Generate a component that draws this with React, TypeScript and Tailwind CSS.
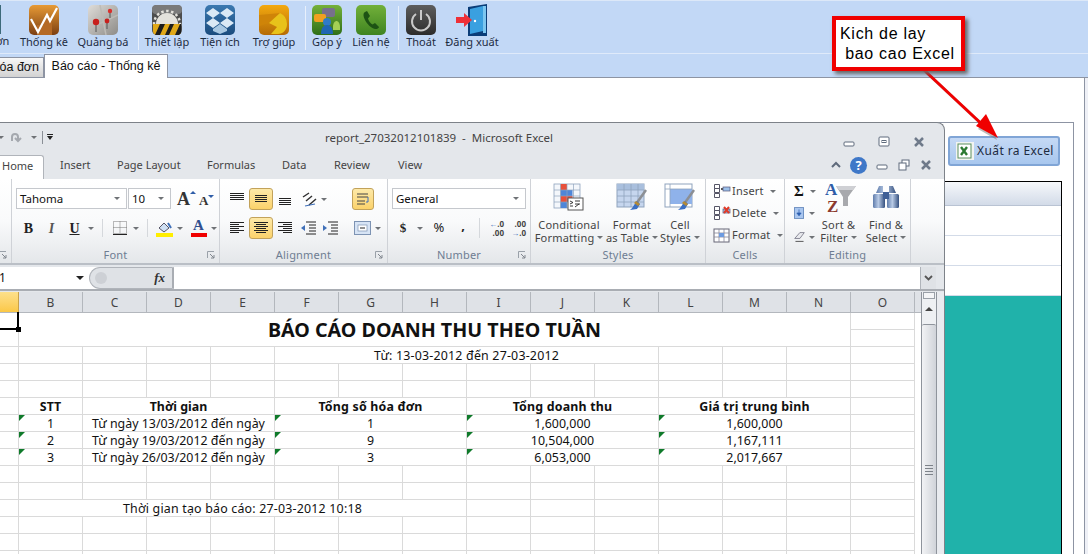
import React from 'react';

const ui = { fontFamily: '"Noto Sans", sans-serif' };

const Dd = ({ className = '' }: { className?: string }) => (
  <span className={`inline-block w-0 h-0 border-x-[3px] border-t-[3px] border-x-transparent border-t-[#6f7276] ${className}`} />
);

const ToolIcon = ({ name }: { name: string }) => {
  const base = { width: 30, height: 30, viewBox: '0 0 30 30' };
  switch (name) {
    case 'stats':
      return (
        <svg {...base}>
          <defs><linearGradient id="st" x1="0" y1="0" x2="0" y2="1"><stop offset="0" stopColor="#e79a35" /><stop offset="1" stopColor="#7c3f12" /></linearGradient></defs>
          <rect width="30" height="30" rx="5" fill="url(#st)" />
          <path d="M8 30V20h7v-6h8v16z" fill="#b56a25" />
          <polyline points="2,14 9,27 18,10 21,16 28,3" fill="none" stroke="#fff" strokeWidth="2.2" />
        </svg>
      );
    case 'pins':
      return (
        <svg {...base}>
          <defs><linearGradient id="pn" x1="0" y1="0" x2="1" y2="1"><stop offset="0" stopColor="#dedcd8" /><stop offset="1" stopColor="#8e8c88" /></linearGradient></defs>
          <rect width="30" height="30" rx="5" fill="url(#pn)" />
          <path d="M0 24L30 10M12 0L18 30" stroke="#bdbbb6" strokeWidth="1.5" />
          <path d="M8 18v9M19 17v7M22 6v7" stroke="#555" strokeWidth="1" />
          <circle cx="8" cy="17" r="3.2" fill="#c8201c" />
          <circle cx="19" cy="16" r="2.4" fill="#c8201c" />
          <circle cx="22" cy="6" r="2.2" fill="#d8302c" />
        </svg>
      );
    case 'settings':
      return (
        <svg {...base}>
          <rect width="30" height="30" rx="5" fill="#4d4d4d" />
          <rect width="30" height="9" rx="4" fill="#7a7a7a" />
          <circle cx="15" cy="19" r="11" fill="#e4e2dc" />
          <circle cx="15" cy="19" r="13" fill="none" stroke="#e4e2dc" strokeWidth="2.5" strokeDasharray="2.5 2.5" />
          <path d="M1 19h28v7a4 4 0 0 1-4 4H5a4 4 0 0 1-4-4z" fill="#e0a818" />
          <path d="M3 30l5-11h5l-5 11zM13 30l5-11h4l-5 11zM23 30l5-11h1v9l-2 2z" fill="#1d1d1d" />
        </svg>
      );
    case 'box':
      return (
        <svg {...base}>
          <defs><linearGradient id="bx" x1="0" y1="0" x2="0" y2="1"><stop offset="0" stopColor="#3b79b0" /><stop offset="1" stopColor="#1b4c7e" /></linearGradient></defs>
          <rect width="30" height="30" rx="5" fill="url(#bx)" />
          <path d="M8 3l7 5-7 5-7-5zM22 3l7 5-7 5-7-5zM8 13l7 5-7 5-7-5zM22 13l7 5-7 5-7-5z" fill="#dbe9f5" />
          <path d="M8 24l7-5 7 5v2l-7 3-7-3z" fill="#a9c8e2" />
        </svg>
      );
    case 'help':
      return (
        <svg {...base}>
          <defs><linearGradient id="hp" x1="0" y1="0" x2="0" y2="1"><stop offset="0" stopColor="#f3a90f" /><stop offset="1" stopColor="#b56b06" /></linearGradient></defs>
          <rect width="30" height="30" rx="5" fill="url(#hp)" />
          <path d="M0 10L22 8 10 18 0 21z" fill="#cf8408" />
          <path d="M10 18L21 8a12 12 0 0 1 7 11c0 6-4 10-9 10h-7l6-7z" fill="#e8c21a" />
        </svg>
      );
    case 'feedback':
      return (
        <svg {...base}>
          <defs><linearGradient id="fb" x1="0" y1="0" x2="0" y2="1"><stop offset="0" stopColor="#75b13a" /><stop offset="1" stopColor="#2f6f17" /></linearGradient></defs>
          <rect width="30" height="30" rx="5" fill="url(#fb)" />
          <rect x="10" y="3" width="13" height="9" rx="2" fill="#77708c" />
          <rect x="2" y="9" width="12" height="8" rx="2" fill="#f0a020" />
          <circle cx="15" cy="17" r="4" fill="#2f7ac8" />
          <path d="M9 29c0-7 3-9 6-9s6 2 6 9z" fill="#1f66b4" />
          <path d="M21 22c0-4 2-6 3.500-6s3.500 2 3.500 6v3h-7z" fill="#a4cf55" />
        </svg>
      );
    case 'phone':
      return (
        <svg {...base}>
          <defs><linearGradient id="ph" x1="0" y1="0" x2="0" y2="1"><stop offset="0" stopColor="#72b03a" /><stop offset="1" stopColor="#3f8420" /></linearGradient></defs>
          <rect width="30" height="30" rx="5" fill="url(#ph)" />
          <path d="M9 7c-2 1-2 4 0 8s6 8 10 9c2 .5 4-1 4-2l-4-4-2.500 1.500c-2-1-4-4-4.500-6L14 11l-3-5z" fill="#1d5314" />
        </svg>
      );
    case 'power':
      return (
        <svg {...base}>
          <defs><linearGradient id="pw" x1="0" y1="0" x2="0" y2="1"><stop offset="0" stopColor="#5d5d5d" /><stop offset="1" stopColor="#2c2c2c" /></linearGradient></defs>
          <rect width="30" height="30" rx="5" fill="url(#pw)" />
          <path d="M10 9a9 9 0 1 0 10 0" fill="none" stroke="#c9c9c9" strokeWidth="2" />
          <path d="M15 5v10" stroke="#c9c9c9" strokeWidth="2" />
        </svg>
      );
    default:
      return (
        <svg width="32" height="32" viewBox="0 0 32 32">
          <path d="M12 3L31 0v32H12z" fill="#0b3d78" />
          <path d="M14 5l13-3v25l-13 3z" fill="#3aa0e0" />
          <path d="M27 2h3v27h-3z" fill="#7cc6f0" />
          <path d="M0 13h8V9l8 7-8 7v-4H0z" fill="#ee2f37" />
          <circle cx="19" cy="17" r="1.200" fill="#fff" />
        </svg>
      );
  }
};

const toolbar = [
  { label: 'Thống kê', icon: 'stats', w: 'w-[60px]' },
  { label: 'Quảng bá', icon: 'pins', w: 'w-[58px]' },
  { sep: 'ml-[6px]' },
  { label: 'Thiết lập', icon: 'settings', w: 'w-[56px]' },
  { label: 'Tiện ích', icon: 'box', w: 'w-[50px]' },
  { label: 'Trợ giúp', icon: 'help', w: 'w-[58px]' },
  { sep: 'ml-[2px]' },
  { label: 'Góp ý', icon: 'feedback', w: 'w-[42px]' },
  { label: 'Liên hệ', icon: 'phone', w: 'w-[46px]' },
  { sep: 'ml-[4px]' },
  { label: 'Thoát', icon: 'power', w: 'w-[44px]' },
  { label: 'Đăng xuất', icon: 'door', w: 'w-[58px]' },
];

const Toolbar = () => (
  <div className="h-[54px] flex bg-[#c2d8f6] border-t border-[#dce8f8] border-b border-b-[#dfeafa] overflow-hidden" style={ui}>
    <div className="w-[14px] flex flex-col justify-end items-start pb-[5px] relative">
      <span className="absolute left-0 top-[4px] w-px h-[29px] bg-[#3d6a7a]" />
      <span className="text-[11px] leading-[14px] text-[#1d2b3f] -ml-[11px] whitespace-nowrap">đơn</span>
    </div>
    {toolbar.map((t, i) =>
      t.sep ? (
        <div key={i} className={`w-px h-[44px] mt-[5px] bg-[#e8f0fb] ${t.sep}`} />
      ) : (
        <div key={i} className={`${t.w} flex flex-col items-center pt-[3px]`}>
          <div className="h-[31px] flex items-center"><ToolIcon name={t.icon as string} /></div>
          <span className="text-[11px] leading-[14px] text-[#1d2b3f] whitespace-nowrap">{t.label}</span>
        </div>
      )
    )}
  </div>
);

const Tabs = () => (
  <div className="h-[24px] flex items-end bg-[#c2d8f6] border-b border-[#8d94a3] font-['Liberation_Sans',sans-serif]">
    <div className="w-[44px] h-[21px] -mb-px flex items-center justify-end pr-[4px] overflow-hidden bg-linear-to-b from-[#f8f8f8] to-[#d2d2d2] border-t border-r border-b border-[#8d94a3] text-[12.500px] text-[#111] whitespace-nowrap">
      óa đơn
    </div>
    <div className="w-[124px] h-[24px] -mb-px flex items-center justify-center bg-white border-t border-x border-[#8d94a3] text-[12.500px] text-[#111]">
      Báo cáo - Thống kê
    </div>
  </div>
);

// ribbon small icons
const LinesIcon = ({ rows }: { rows: number[][] }) => (
  <svg width="16" height="14" viewBox="0 0 16 14">
    {rows.map(([x1, x2, y], i) => (
      <line key={i} x1={x1} x2={x2} y1={y + 0.5} y2={y + 0.5} stroke="#222" strokeWidth="1" />
    ))}
  </svg>
);
const top3 = [[1, 15, 1], [1, 15, 3], [1, 15, 5], [1, 15, 7]];
const mid3 = [[2, 14, 3], [2, 14, 5], [2, 14, 7], [2, 14, 9]];
const bot3 = [[2, 14, 6], [2, 14, 8], [2, 14, 10], [2, 14, 12]];
const left = [[1, 15, 1], [1, 10, 3], [1, 15, 5], [1, 10, 7], [1, 15, 9], [1, 10, 11]];
const center = [[1, 15, 1], [3, 13, 3], [1, 15, 5], [3, 13, 7], [1, 15, 9], [3, 13, 11]];
const right = [[1, 15, 1], [6, 15, 3], [1, 15, 5], [6, 15, 7], [1, 15, 9], [6, 15, 11]];

const Active = ({ children, className = 'w-[24px]' }: { children: React.ReactNode; className?: string }) => (
  <div className={`h-[22px] ${className} flex items-center justify-center rounded-[3px] border border-[#c2a25a] bg-linear-to-b from-[#fde9a8] to-[#fbd26a]`}>
    {children}
  </div>
);
const Box = ({ className = 'w-[24px]', children }: { className?: string; children?: React.ReactNode }) => (
  <div className={`h-[22px] ${className} flex items-center justify-center`}>{children}</div>
);

const Group = ({ label, className, launcher, children }: { label: string; className: string; launcher?: boolean; children: React.ReactNode }) => (
  <div className={`${className} relative flex flex-col border-r border-[#cfd2d7]`}>
    <div className="flex-1 min-h-0">{children}</div>
    <div className="h-[17px] text-center text-[11px] leading-[17px] text-[#6e7d92] tracking-[0.2px]">{label}</div>
    {launcher && (
      <svg className="absolute right-[4px] bottom-[4px]" width="8" height="8" viewBox="0 0 8 8">
        <path d="M0.5 7V0.5H7" fill="none" stroke="#9aa1a9" />
        <path d="M3 3l4 4M7 4v3H4" fill="none" stroke="#80868e" />
      </svg>
    )}
  </div>
);

const Combo = ({ className, text }: { className: string; text: string }) => (
  <div className={`${className} h-[21px] bg-white border border-[#c5c8cd] flex items-center justify-between pl-[3px] pr-[6px] text-[11.500px] text-[#111]`}>
    <span>{text}</span>
    <Dd />
  </div>
);

const BigIcon = ({ type }: { type: 'cond' | 'table' | 'cell' }) => (
  <svg width="32" height="28" viewBox="0 0 32 28">
    {type === 'cond' && (
      <>
        <g fill="#f4f7fb" stroke="#8fa3bd" strokeWidth="0.8">
          <rect x="1" y="1" width="26" height="24" />
        </g>
        <rect x="7.500" y="1" width="6.500" height="6" fill="#e8503a" />
        <rect x="7.500" y="7" width="12" height="6" fill="#4f86d8" />
        <rect x="7.500" y="13" width="12" height="6" fill="#e8503a" />
        <rect x="7.500" y="19" width="6.500" height="6" fill="#4f86d8" />
        <path d="M1 7h26M1 13h26M1 19h26M7.500 1v24M14 1v24M20.500 1v24" stroke="#8fa3bd" strokeWidth="0.7" />
        <rect x="15" y="15" width="15" height="12" fill="#fff" stroke="#555" />
        <path d="M17 18l3 1.500-3 1.500M17 23h3M22 18h5M22 21h5M22 24l4-3" fill="none" stroke="#222" strokeWidth="0.9" />
      </>
    )}
    {type !== 'cond' && (
      <>
        <rect x="1" y="1" width="27" height="23" fill={type === 'table' ? '#c6d6ee' : '#fff'} stroke="#8fa3bd" />
        {type === 'cell' && <rect x="6" y="6" width="22" height="15" fill="#8fb2ea" />}
        {type === 'table' && <rect x="1" y="1" width="27" height="6" fill="#a9bfdd" />}
        {type === 'table' && <path d="M1 7h27M1 13h27M1 19h27M8 1v23M15 1v23M22 1v23" stroke="#8fa3bd" strokeWidth="0.8" />}
        {type === 'cell' && <path d="M1 6h27M6 1v23" stroke="#8fa3bd" strokeWidth="0.8" />}
        <path d="M30 7L20 21" stroke="#8c8f94" strokeWidth="2.500" />
        <path d="M21 18l3 3-3 5-7 1c3-2 4-6 7-9z" fill="#3b6fc2" />
        <path d="M20 18l4 3-2 2-4-3z" fill="#b58a34" />
      </>
    )}
  </svg>
);

const CellRow = ({ text, kind }: { text: string; kind: 'ins' | 'del' | 'fmt' }) => (
  <div className="h-[22px] flex items-center text-[11px] text-[#444] tracking-[0.2px]">
    <svg width="18" height="16" viewBox="0 0 18 16" className="mr-[1px]">
      {kind === 'fmt' ? (
        <>
          <rect x="1" y="2" width="15" height="13" fill="#fff" stroke="#667" />
          <path d="M1 6h15M1 10h15M6 2v13M11 2v13" stroke="#889" strokeWidth="0.8" />
          <rect x="6" y="6" width="5" height="4" fill="#6d9be0" />
        </>
      ) : (
        <>
          <path d="M1.500 1.500h5v4h-5zM1.500 5.500h5v4h-5zM1.500 10.500h5v4h-5z" fill="#fff" stroke="#556" />
          {kind === 'ins' && <path d="M8 6h2M9 5v2" stroke="#222" />}
          <rect x="10" y="4" width="7" height="4" fill="#9cc0ea" stroke="#557" strokeWidth="0.7" />
          {kind === 'del' && <path d="M11 2l5 6M16 2l-5 6" stroke="#e03a28" strokeWidth="2" />}
        </>
      )}
    </svg>
    <span>{text}</span>
    <Dd className="ml-[6px]" />
  </div>
);

const Ribbon = () => (
  <div className="h-[86px] flex bg-linear-to-b from-white via-[#f9fafb] to-[#e4e7ea] border-b-2 border-[#babfc6]" style={ui}>
    <Group label="" className="w-[12px]" launcher><div /></Group>

    <Group label="Font" className="w-[208px]" launcher>
      <div className="pt-[9px] pl-[4px]">
        <div className="flex items-center">
          <Combo className="w-[111px]" text="Tahoma" />
          <Combo className="w-[43px] ml-px" text="10" />
          <div className="ml-[6px] w-[22px] flex font-['Liberation_Serif',serif] font-bold text-[18px] leading-none text-[#333] items-start">A<span className="w-0 h-0 mt-[1px] border-x-[3px] border-b-[3px] border-x-transparent border-b-[#2f5da8]" /></div>
          <div className="w-[20px] flex font-['Liberation_Serif',serif] font-bold text-[13px] leading-none text-[#333] items-end pt-[4px]">A<span className="w-0 h-0 mb-[9px] border-x-[3px] border-t-[3px] border-x-transparent border-t-[#2f5da8]" /></div>
        </div>
        <div className="flex items-center mt-[9px] h-[20px] font-['Liberation_Serif',serif] text-[#222]">
          <Box className="w-[23px] ml-[1px] font-bold text-[14px]">B</Box>
          <Box className="w-[23px] italic font-bold text-[14px] text-[#555]">I</Box>
          <Box className="w-[23px] underline font-bold text-[14px]">U</Box>
          <Dd className="ml-[2px]" />
          <div className="w-px h-[18px] bg-[#d5d8dc] ml-[8px]" />
          <svg className="ml-[10px]" width="14" height="14" viewBox="0 0 14 14">
            <path d="M0.500 0.500h13v12h-13zM7 0.500v12M0.500 6.500h13" fill="none" stroke="#777" strokeDasharray="1 1" />
            <path d="M0 13.500h14" stroke="#222" />
          </svg>
          <Dd className="ml-[6px]" />
          <div className="w-px h-[18px] bg-[#d5d8dc] ml-[8px]" />
          <svg className="ml-[8px]" width="17" height="17" viewBox="0 0 17 17">
            <path d="M3 8l5-5 5 5-5 4z" fill="#cfe0f3" stroke="#556" />
            <path d="M12 3l3 5" stroke="#3f6fb8" strokeWidth="2" />
            <rect y="13" width="17" height="4" fill="#ffee00" />
          </svg>
          <Dd className="ml-[4px]" />
          <div className="ml-[7px] w-[17px] flex flex-col items-center font-bold text-[15px] leading-[13px] text-[#2f4f8f]">
            A<span className="w-[16px] h-[4px] bg-[#f00000] mt-px" />
          </div>
          <Dd className="ml-[4px]" />
        </div>
      </div>
    </Group>

    <Group label="Alignment" className="w-[168px]" launcher>
      <div className="pt-[9px] pl-[5px] flex">
        <div className="w-[127px]">
          <div className="flex items-center">
            <Box><LinesIcon rows={top3} /></Box>
            <Active><LinesIcon rows={mid3} /></Active>
            <Box><LinesIcon rows={bot3} /></Box>
            <svg className="ml-[4px]" width="17" height="17" viewBox="0 0 17 17">
              <path d="M2 6l6-4M5 10l6-5M8 14l7-6" stroke="#333" strokeWidth="1.500" />
              <path d="M4 15l10-2" stroke="#3f6fb8" strokeWidth="1.200" />
            </svg>
            <Dd className="ml-[3px]" />
          </div>
          <div className="flex items-center mt-[7px]">
            <Box><LinesIcon rows={left} /></Box>
            <Active><LinesIcon rows={center} /></Active>
            <Box><LinesIcon rows={right} /></Box>
            <svg className="ml-[3px]" width="16" height="14" viewBox="0 0 16 14">
              <path d="M6 1h10M9 4h7M9 7h7M9 10h7M6 13h10" stroke="#222" />
              <path d="M1 7l4-3v6z" fill="#3f6fb8" />
            </svg>
            <svg className="ml-[6px]" width="16" height="14" viewBox="0 0 16 14">
              <path d="M6 1h10M9 4h7M9 7h7M9 10h7M6 13h10" stroke="#222" />
              <path d="M5 7L1 4v6z" fill="#3f6fb8" />
            </svg>
          </div>
        </div>
        <div>
          <Active className="w-[22px]">
            <svg width="14" height="14" viewBox="0 0 14 14">
              <path d="M1 2h11M1 5h11M1 9h8M1 12h8" stroke="#444" />
              <path d="M12 5v5h-2" fill="none" stroke="#3f6fb8" />
            </svg>
          </Active>
          <div className="flex items-center mt-[7px] h-[22px]">
            <svg className="ml-[2px]" width="17" height="14" viewBox="0 0 17 14">
              <rect x="0.500" y="0.500" width="16" height="13" fill="#d7e4f5" stroke="#7d93b3" />
              <rect x="4" y="4" width="9" height="6" fill="#fff" stroke="#7d93b3" strokeWidth="0.7" />
              <path d="M6 7h5" stroke="#222" />
            </svg>
            <Dd className="ml-[4px]" />
          </div>
        </div>
      </div>
    </Group>

    <Group label="Number" className="w-[143px]" launcher>
      <div className="pt-[9px] pl-[4px]">
        <Combo className="w-[134px]" text="General" />
        <div className="flex items-center mt-[9px] h-[20px] text-[#222]">
          <span className="w-[22px] text-center font-bold text-[13px] font-['Liberation_Serif',serif]">$</span>
          <Dd className="ml-[3px]" />
          <span className="w-[20px] ml-[6px] text-center text-[13px]">%</span>
          <span className="w-[20px] ml-[4px] text-center font-bold text-[13px] -mt-[4px]">,</span>
          <div className="w-px h-[20px] bg-[#d5d8dc] ml-[6px]" />
          <div className="ml-[8px] w-[16px] text-[8px] leading-[9px] text-right font-bold text-[#444]"><span className="text-[#3f6fb8]">←</span>.0<br />.00</div>
          <div className="ml-[6px] w-[16px] text-[8px] leading-[9px] text-right font-bold text-[#444]">.00<br /><span className="text-[#3f6fb8]">→</span>.0</div>
        </div>
      </div>
    </Group>

    <Group label="Styles" className="w-[175px]">
      <div className="flex text-[11px] leading-[13px] text-[#444] text-center tracking-[0.2px]">
        {[
          { i: 'cond', w: 'w-[76px]', a: 'Conditional', b: 'Formatting' },
          { i: 'table', w: 'w-[50px]', a: 'Format', b: 'as Table' },
          { i: 'cell', w: 'w-[46px]', a: 'Cell', b: 'Styles' },
        ].map((s) => (
          <div key={s.a} className={`${s.w} flex flex-col items-center pt-[4px] whitespace-nowrap`}>
            <div className="h-[35px]"><BigIcon type={s.i as 'cond'} /></div>
            <span>{s.a}</span>
            <span className="flex items-center">{s.b}<Dd className="ml-[3px]" /></span>
          </div>
        ))}
      </div>
    </Group>

    <Group label="Cells" className="w-[79px]">
      <div className="pt-[1px] pl-[7px]">
        <CellRow text="Insert" kind="ins" />
        <CellRow text="Delete" kind="del" />
        <CellRow text="Format" kind="fmt" />
      </div>
    </Group>

    <Group label="Editing" className="w-[126px]">
      <div className="flex text-[11px] leading-[13px] text-[#444] text-center tracking-[0.2px]">
        <div className="w-[30px] pl-[9px] pt-[1px] shrink-0">
          <div className="h-[22px] flex items-center font-bold text-[15px] text-[#111] font-['Liberation_Serif',serif]">Σ<Dd className="ml-[6px]" /></div>
          <div className="h-[22px] flex items-center">
            <svg width="14" height="16" viewBox="0 0 14 16">
              <rect x="0.500" y="0.500" width="13" height="15" fill="#a9c6ef" stroke="#4e76b0" />
              <path d="M7 3v7M4 8l3 4 3-4z" fill="#2a5fb0" stroke="#2a5fb0" />
            </svg>
            <Dd className="ml-[5px]" />
          </div>
          <div className="h-[22px] flex items-center mt-[2px]">
            <svg width="15" height="14" viewBox="0 0 15 14">
              <path d="M1 9l7-8h6l-6 8z" fill="#e9eaee" stroke="#667" />
              <path d="M2 13h11" stroke="#222" />
            </svg>
            <Dd className="ml-[4px]" />
          </div>
        </div>
        <div className="w-[47px] flex flex-col items-center pt-[4px] shrink-0">
          <div className="h-[35px] w-[32px] ml-[5px]">
            <svg width="32" height="35" viewBox="0 0 32 35" className="-mt-[2px]">
              <path d="M11 5h20l-8 11v9h-5v-9z" fill="#a8a9ad" />
              <path d="M11 5h20l-3 4H14z" fill="#cfd0d4" />
              <text x="0" y="14" fontSize="17" fontWeight="700" fontFamily="Liberation Serif" fill="#2f5da8">A</text>
              <text x="2" y="31" fontSize="17" fontWeight="700" fontFamily="Liberation Serif" fill="#8c3a2f">Z</text>
            </svg>
          </div>
          <span>Sort &amp;</span>
          <span className="flex items-center">Filter<Dd className="ml-[3px]" /></span>
        </div>
        <div className="w-[48px] flex flex-col items-center pt-[4px] shrink-0">
          <div className="h-[35px]">
            <svg width="28" height="28" viewBox="0 0 28 28">
              <defs><linearGradient id="bn" x1="0" y1="0" x2="1" y2="0"><stop offset="0" stopColor="#5f7cab" /><stop offset="0.45" stopColor="#b9cbe6" /><stop offset="1" stopColor="#35507f" /></linearGradient></defs>
              <path d="M4 10l3-7h4v7zM17 10V3h4l3 7z" fill="url(#bn)" />
              <rect x="1" y="11" width="12" height="14" rx="1.500" fill="url(#bn)" />
              <rect x="15" y="11" width="12" height="14" rx="1.500" fill="url(#bn)" />
              <rect x="11" y="9" width="6" height="7" fill="#3f5f96" />
            </svg>
          </div>
          <span>Find &amp;</span>
          <span className="flex items-center">Select<Dd className="ml-[3px]" /></span>
        </div>
      </div>
    </Group>
    <div className="flex-1" />
  </div>
);

const FormulaBar = () => (
  <div className="h-[24px] mt-[2px] flex bg-white border-b-2 border-[#a9adb3] font-['Liberation_Sans',sans-serif]" style={ui}>
    <div className="w-[89px] flex items-center justify-between pr-[5px] text-[12px] text-[#111]">
      <span className="-ml-[1px]">1</span>
      <span className="w-0 h-0 border-x-[4px] border-t-[4px] border-x-transparent border-t-[#222]" />
    </div>
    <div className="w-[85px] flex items-center bg-[#dfe2e6] rounded-l-[12px] border-l border-y border-[#b0b4ba] border-r-2 border-r-[#a9adb3]">
      <span className="w-[12px] h-[12px] ml-[5px] rounded-full bg-[#cdd0d5]" />
      <span className="ml-auto mr-[7px] italic font-bold text-[13px] text-[#333] font-['Liberation_Serif',serif]">fx</span>
    </div>
    <div className="flex-1" />
    <div className="w-[16px] flex items-center justify-center bg-[#dfe2e6] border-l border-[#b0b4ba]">
      <svg width="9" height="6" viewBox="0 0 9 6"><path d="M1 1l3.500 3.500L8 1" fill="none" stroke="#555" strokeWidth="1.800" /></svg>
    </div>
    <div className="w-[8px] bg-[#e4e7eb]" />
  </div>
);

const cell = 'relative flex items-center justify-center whitespace-nowrap border-r border-b border-[#dadada] text-[12.400px] leading-none text-[#111]';
const Tri = () => <span className="absolute left-0 top-0 w-0 h-0 border-t-[6px] border-r-[6px] border-t-[#0f7a2a] border-r-transparent" />;
const Blank = ({ n }: { n: number }) => <>{Array.from({ length: n }).map((_, i) => <div key={i} className={cell} />)}</>;

const dataRows = [
  ['1', 'Từ ngày 13/03/2012 đến ngày', '1', '1,600,000', '1,600,000'],
  ['2', 'Từ ngày 19/03/2012 đến ngày', '9', '10,504,000', '1,167,111'],
  ['3', 'Từ ngày 26/03/2012 đến ngày', '3', '6,053,000', '2,017,667'],
];

const Sheet = () => (
  <div className="w-[921px] overflow-hidden bg-white" style={ui}>
    <div className="grid grid-cols-[19px_repeat(14,64px)] h-[21px] bg-[#dfe2e7] border-b border-[#b3b7bd]">
      <div className="bg-linear-to-b from-[#fde08a] to-[#fbc845] border-r border-[#c9a24a]" />
      {'BCDEFGHIJKLMNO'.split('').map((c) => (
        <div key={c} className="flex items-center justify-center pt-[1px] text-[12px] text-[#444] border-r border-[#b3b7bd]">{c}</div>
      ))}
    </div>
    <div className="grid grid-cols-[19px_repeat(14,64px)] auto-rows-[17px]">
      <div className={cell}>
        <span className="absolute -left-[2px] -top-px right-[-1px] bottom-[-1px] border-r-2 border-b-2 border-black" />
        <span className="absolute -right-[3px] -bottom-[3px] w-[5px] h-[5px] bg-black z-10" />
      </div>
      <div className={`${cell} col-span-13 row-span-2 font-bold text-[19.700px]`}>BÁO CÁO DOANH THU THEO TUẦN</div>
      <Blank n={1} />
      <Blank n={2} />
      {/* row 3 */}
      <Blank n={5} />
      <div className={`${cell} col-span-6 pt-[2px] tracking-[0.2px]`}>Từ: 13-03-2012 đến 27-03-2012</div>
      <Blank n={4} />
      {/* rows 4, 5 */}
      <Blank n={30} />
      {/* header */}
      <Blank n={1} />
      <div className={`${cell} pt-[2px] font-bold`}>STT</div>
      <div className={`${cell} pt-[2px] col-span-3 font-bold`}>Thời gian</div>
      <div className={`${cell} pt-[2px] col-span-3 font-bold tracking-[0.2px]`}>Tổng số hóa đơn</div>
      <div className={`${cell} pt-[2px] col-span-3 font-bold tracking-[0.2px]`}>Tổng doanh thu</div>
      <div className={`${cell} pt-[2px] col-span-3 font-bold tracking-[0.2px]`}>Giá trị trung bình</div>
      <Blank n={1} />
      {dataRows.map((r) => (
        <React.Fragment key={r[0]}>
          <Blank n={1} />
          <div className={`${cell} pt-[2px]`}><Tri />{r[0]}</div>
          <div className={`${cell} pt-[2px] col-span-3`}>{r[1]}</div>
          <div className={`${cell} pt-[2px] col-span-3`}><Tri />{r[2]}</div>
          <div className={`${cell} pt-[2px] col-span-3`}><Tri />{r[3]}</div>
          <div className={`${cell} pt-[2px] col-span-3`}><Tri />{r[4]}</div>
          <Blank n={1} />
        </React.Fragment>
      ))}
      <Blank n={30} />
      <Blank n={1} />
      <div className={`${cell} pt-[2px] col-span-7 tracking-[0.2px]`}>Thời gian tạo báo cáo: 27-03-2012 10:18</div>
      <Blank n={7} />
      <Blank n={45} />
    </div>
  </div>
);

const Scrollbar = () => (
  <div className="w-[16px] flex flex-col bg-[#eef0f3] border-x border-[#8f949c]">
    <div className="h-[7px] mx-[1px] bg-[#f4f5f7] border border-[#9aa0a8]" />
    <div className="h-[19px] flex items-center justify-center">
      <span className="w-0 h-0 border-x-[4px] border-b-[4px] border-x-transparent border-b-[#444]" />
    </div>
    <div className="h-[6px]" />
    <div className="flex-1 flex flex-col items-center justify-center gap-[2px] pt-[60px] rounded-t-[2px] border-t border-[#8f949c] bg-linear-to-r from-[#f2f3f5] to-[#d0d3d9]">
      <span className="w-[8px] h-px bg-[#7d8289]" />
      <span className="w-[8px] h-px bg-[#7d8289]" />
      <span className="w-[8px] h-px bg-[#7d8289]" />
      <span className="w-[8px] h-px bg-[#7d8289]" />
    </div>
  </div>
);

const WinBtn = ({ kind, color = '#5f6b7c' }: { kind: 'min' | 'max' | 'close' | 'restore'; color?: string }) => (
  <svg width="14" height="12" viewBox="0 0 14 12">
    {kind === 'min' && <rect x="2" y="6" width="10" height="4" rx="1" fill="#fff" stroke={color} />}
    {kind === 'max' && <><rect x="2" y="1" width="10" height="9" rx="1" fill="#fff" stroke={color} /><rect x="5" y="4.500" width="4" height="2" fill="none" stroke={color} /></>}
    {kind === 'restore' && <><rect x="5" y="1" width="7" height="6" fill="#fff" stroke={color} /><rect x="2" y="4" width="7" height="7" fill="#fff" stroke={color} /></>}
    {kind === 'close' && <path d="M3 2l8 8M11 2l-8 8" stroke={color} strokeWidth="2.500" />}
  </svg>
);

const ExcelWindow = () => (
  <div className="absolute left-0 top-[122px] bottom-0 w-[945px] flex flex-col overflow-hidden bg-[#e4e7eb] border-t border-r border-[#7d8289] rounded-tr-[8px]" style={ui}>
    <div className="h-[32px] flex items-center">
      <div className="w-[325px] flex items-center pb-[4px]">
        <Dd className="-ml-[2px]" />
        <svg className="ml-[6px]" width="14" height="13" viewBox="0 0 14 13">
          <path d="M3 10V6a3 3 0 0 1 6 0v3M6 7l3 3 3-3" fill="none" stroke="#a5a9af" strokeWidth="2" transform="translate(-1 0)" />
        </svg>
        <Dd className="ml-[7px]" />
        <span className="w-px h-[13px] bg-[#8a8f96] ml-[5px]" />
        <span className="ml-[4px] flex flex-col items-center gap-[1px]">
          <span className="w-[6px] h-px bg-[#222]" />
          <span className="w-0 h-0 border-x-[3px] border-t-[4px] border-x-transparent border-t-[#222]" />
        </span>
      </div>
      <span className="text-[11.500px] text-[#444] whitespace-pre pb-[2px]">report_27032012101839  -  Microsoft Excel</span>
      <div className="ml-auto flex items-center gap-[21px] pr-[18px] pt-[6px]">
        <WinBtn kind="min" />
        <WinBtn kind="max" />
        <WinBtn kind="close" color="#6f7a8a" />
      </div>
    </div>
    <div className="h-[24px] flex items-end text-[11px] text-[#444]">
      <div className="w-[44px] h-[24px] flex items-center pl-[2px] pb-[2px] bg-white border-t border-r border-[#b0b4ba] rounded-tr-[3px]">Home</div>
      <span className="h-[24px] pt-[2px] ml-[16px] w-[57px]">Insert</span>
      <span className="h-[24px] pt-[2px] w-[90px]">Page Layout</span>
      <span className="h-[24px] pt-[2px] w-[75px]">Formulas</span>
      <span className="h-[24px] pt-[2px] w-[52px]">Data</span>
      <span className="h-[24px] pt-[2px] w-[64px]">Review</span>
      <span className="h-[24px] pt-[2px]">View</span>
      <div className="ml-auto self-center flex items-center gap-[8px] pr-[11px] pb-[4px]">
        <svg width="12" height="10" viewBox="0 0 12 10"><path d="M2 7l4-4 4 4" fill="none" stroke="#5f6b7c" strokeWidth="2" /></svg>
        <span className="w-[17px] h-[17px] rounded-full bg-[#3f78c8] text-white text-[13px] font-bold leading-[17px] text-center">?</span>
        <WinBtn kind="min" />
        <WinBtn kind="restore" />
        <WinBtn kind="close" color="#6f7a8a" />
      </div>
    </div>
    <Ribbon />
    <FormulaBar />
    <div className="flex flex-1 min-h-0 mt-[1px]">
      <Sheet />
      <Scrollbar />
      <div className="flex-1 bg-[#e9ebef]" />
    </div>
  </div>
);

const RightColumn = () => (
  <div className="w-[118px] h-full flex flex-col items-end pt-[13px] pr-[11px] box-content" style={ui}>
    <div className="w-[112px] h-[30px] mr-[2px] flex items-center rounded-[3px] border-2 border-[#80a5d6] bg-linear-to-b from-[#c5d9f5] to-[#a8c7ee]">
      <svg className="ml-[6px]" width="18" height="18" viewBox="0 0 18 18">
        <rect width="18" height="18" fill="#f2f4f1" />
        <rect x="2" y="2" width="13" height="14" fill="#fff" stroke="#5a8f5f" />
        <path d="M5 5l6 8M11 5l-6 8" stroke="#2c7a32" strokeWidth="2.400" />
      </svg>
      <span className="ml-[3px] text-[12px] tracking-[0.4px] text-[#1d2b3f] whitespace-nowrap">Xuất ra Excel</span>
    </div>
    <div className="w-[120px] flex-1 mt-[15px] flex flex-col border-t border-r border-black">
      <div className="h-[24px] bg-linear-to-b from-[#f6f8fb] to-[#d3dbe8] border-b border-[#b9c3d3]" />
      <div className="h-[30px] bg-white border-b border-[#d3dbe8]" />
      <div className="h-[30px] bg-white border-b border-[#d3dbe8]" />
      <div className="h-[30px] bg-white border-b border-[#d3dbe8]" />
      <div className="flex-1 bg-[#20b2aa]" />
    </div>
  </div>
);

const Callout = () => (
  <>
    <svg className="absolute left-[915px] top-[60px]" width="95" height="90" viewBox="0 0 95 90">
      <path d="M11 12L75 72" stroke="#777" strokeWidth="3" opacity="0.5" />
      <path d="M82 80L63 69 73 58z" fill="#777" opacity="0.5" />
      <path d="M9 10L72 69" stroke="#f00000" strokeWidth="3" />
      <path d="M83 78L61 66 71 54z" fill="#f00000" />
    </svg>
    <div className="absolute left-[832px] top-[16px] w-[133px] h-[55px] border-[4px] border-[#f00000] bg-white shadow-[3px_3px_4px_#666] pl-[4px] pt-[4px] font-['Liberation_Sans',sans-serif] text-[16px] leading-[20px] tracking-[0.7px] text-black whitespace-pre">
      {'Kich de lay\n bao cao Excel'}
    </div>
  </>
);

export default function App() {
  return (
    <div className="relative w-[1088px] h-[554px] overflow-hidden flex flex-col bg-[#eef0f6]">
      <Toolbar />
      <Tabs />
      <div className="flex-1 min-h-0 mr-[3px] bg-white border-r border-[#8d94a3]">
        <div className="h-full mt-[44px] pr-[10px]">
          <div className="h-full flex justify-end border-t border-r border-[#8d94a3] bg-white">
            <RightColumn />
          </div>
        </div>
      </div>
      <ExcelWindow />
      <Callout />
    </div>
  );
}
